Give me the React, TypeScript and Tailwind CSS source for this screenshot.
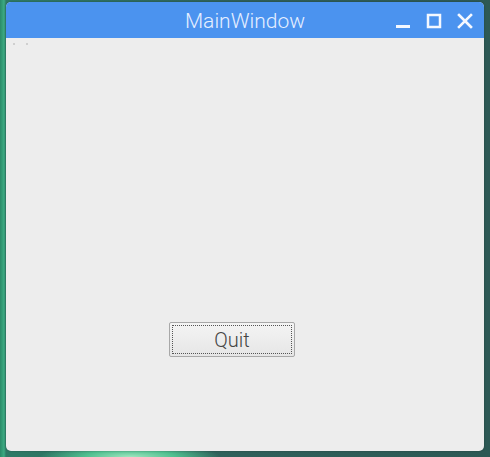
import React from "react";

export default function App() {
  return (
    <div
      className="w-[490px] h-[457px] overflow-hidden pl-[6px] pt-[2px]"
      style={{
        background:
          "radial-gradient(ellipse 90px 14px at 130px 457px, #9fe6bf 0%, #4fbf8f 50%, rgba(60,140,110,0) 100%), linear-gradient(90deg, #2a8a68 0px, #3cab82 4px, #2e7a66 6px, #2f5f5a 50%, #2d5955 100%)",
      }}
    >
      <div className="w-[478px] h-[449px] rounded-[5px] overflow-hidden flex flex-col bg-[#ededed] shadow-[0_0_2px_rgba(0,0,0,0.3)]">
        <div className="h-[36px] bg-[#4b93ef] grid grid-cols-[1fr_auto_1fr] items-center shrink-0">
          <div />
          <div
            className="text-[21px] text-[#e6efff] pt-[3px] leading-none"
            style={{ fontFamily: "Roboto, 'Liberation Sans', sans-serif", fontWeight: 300 }}
          >
            MainWindow
          </div>
          <div className="flex justify-end items-center gap-[15px] pr-[11px] pt-[1px]">
            <svg width="16" height="16" viewBox="0 0 16 16">
              <rect x="1" y="12" width="14" height="3" fill="#f4f8ff" />
            </svg>
            <svg width="16" height="16" viewBox="0 0 16 16">
              <rect x="2" y="2" width="12" height="12" fill="none" stroke="#f4f8ff" strokeWidth="2.5" />
            </svg>
            <svg width="16" height="16" viewBox="0 0 16 16">
              <path d="M2 2 L14 14 M14 2 L2 14" stroke="#f4f8ff" strokeWidth="2.6" strokeLinecap="square" />
            </svg>
          </div>
        </div>
        <div className="flex-1 flex flex-col pl-[7px] pt-[5px]">
          <div className="flex gap-[11px]">
            <div className="w-[2px] h-[2px] bg-[#cfcfcf]" />
            <div className="w-[2px] h-[2px] bg-[#cfcfcf]" />
          </div>
          <div className="pl-[156px] pt-[277px]">
            <button className="w-[126px] h-[35px] border border-[#a8a8a8] rounded-[2px] bg-gradient-to-b from-[#f4f4f4] to-[#e6e6e6] p-[2px]">
              <div
                className="w-full h-full border border-dotted border-[#555] flex items-center justify-center text-[20px] text-[#444] pt-[1px]"
                style={{ fontFamily: "Roboto, 'Liberation Sans', sans-serif", fontWeight: 300 }}
              >
                Quit
              </div>
            </button>
          </div>
        </div>
      </div>
    </div>
  );
}
